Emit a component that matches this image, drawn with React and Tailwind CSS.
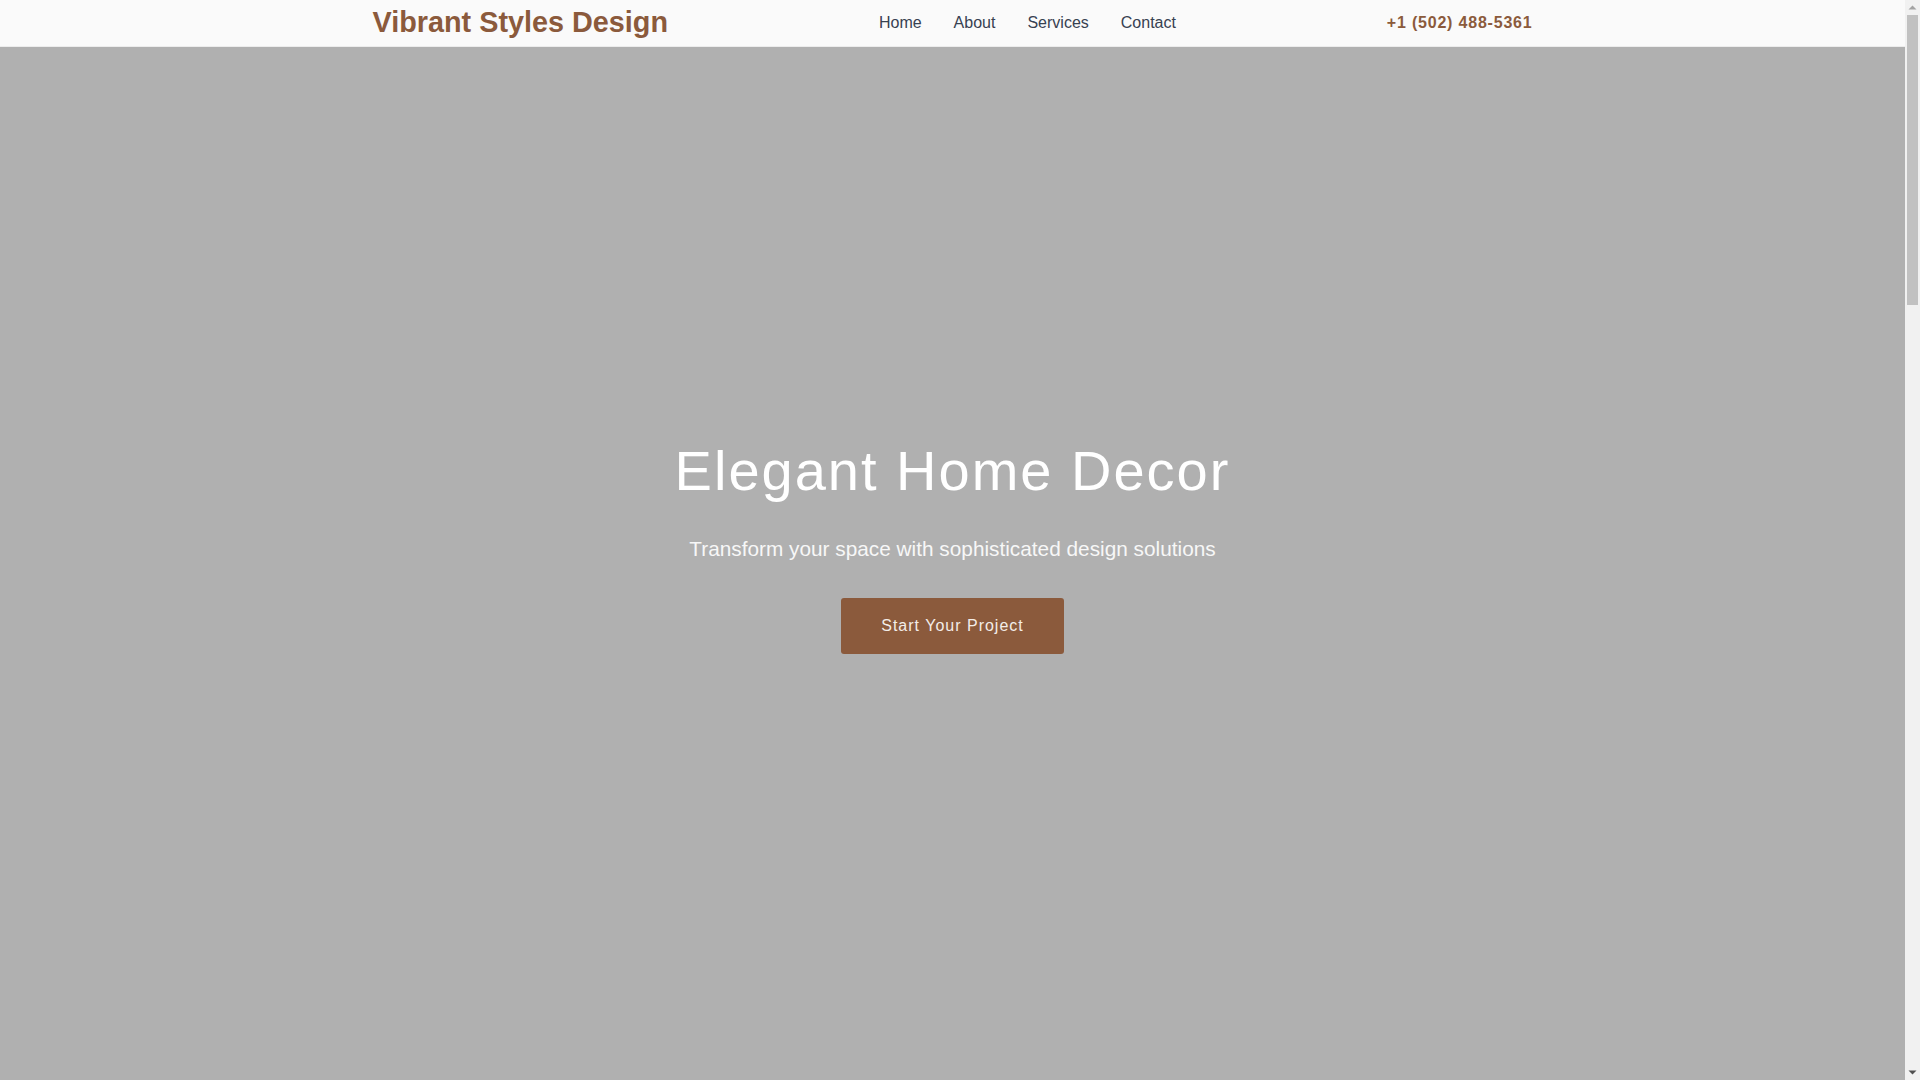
import React from "react";
import { Sofa, Lamp, Palette, Ruler, Phone, Mail, MapPin } from "lucide-react";

const navLinks = ["Home", "About", "Services", "Contact"];

const services = [
  { icon: Sofa, title: "Interior Styling", text: "Curated furniture and accessories that bring warmth and character to every room." },
  { icon: Palette, title: "Color Consultation", text: "Palettes chosen to suit your light, your architecture and the way you live." },
  { icon: Lamp, title: "Lighting Design", text: "Layered lighting plans that set the mood from morning coffee to late dinners." },
  { icon: Ruler, title: "Space Planning", text: "Thoughtful layouts that make the most of every square foot of your home." },
];

const Header = () => (
  <header className="sticky top-0 z-20 bg-[#fafafa] border-b border-[#ececec]">
    <div className="max-w-[1200px] mx-auto px-5 h-[46px] flex items-center justify-between">
      <a href="#" className="text-[1.8rem] font-bold text-[#8b5a3c] leading-normal">
        Vibrant Styles Design
      </a>
      <nav className="flex items-center gap-8">
        {navLinks.map((link) => (
          <a key={link} href={`#${link.toLowerCase()}`} className="text-base text-[#374151] hover:text-[#8b5a3c]">
            {link}
          </a>
        ))}
      </nav>
      <a href="tel:+15024885361" className="text-base font-bold tracking-[0.8px] text-[#8b5a3c]">
        +1 (502) 488-5361
      </a>
    </div>
  </header>
);

const Hero = () => (
  <section id="home" className="h-[calc(100vh-47px)] pb-[36px] bg-[#b0b0b0] flex flex-col items-center justify-center text-center">
    <h1 className="text-[3.5rem] leading-[1.2] font-normal tracking-[2px] text-white mb-7">
      Elegant Home Decor
    </h1>
    <p className="text-[1.3rem] leading-normal text-[#f7f7f7] mb-[34px]">
      Transform your space with sophisticated design solutions
    </p>
    <a href="#contact" className="bg-[#8b5a3c] text-[#f3ede8] text-base tracking-[1px] px-10 py-4 rounded-[3px] hover:bg-[#7a4e33]">
      Start Your Project
    </a>
  </section>
);

const About = () => (
  <section id="about" className="bg-white py-28">
    <div className="max-w-[1200px] mx-auto px-5 grid grid-cols-2 gap-16 items-center">
      <div className="h-[460px] bg-[#d9d2cb] rounded" />
      <div>
        <h2 className="text-4xl text-[#8b5a3c] font-bold mb-6">About Us</h2>
        <p className="text-lg text-[#4b5563] leading-relaxed mb-4">
          For over a decade, Vibrant Styles Design has helped homeowners create spaces that feel
          personal, comfortable and beautifully composed.
        </p>
        <p className="text-lg text-[#4b5563] leading-relaxed">
          We listen first, then design with care, balancing timeless materials with fresh ideas.
        </p>
      </div>
    </div>
  </section>
);

const Services = () => (
  <section id="services" className="bg-[#f5f1ed] py-28">
    <div className="max-w-[1200px] mx-auto px-5">
      <h2 className="text-4xl text-[#8b5a3c] font-bold text-center mb-16">Our Services</h2>
      <div className="grid grid-cols-2 gap-8">
        {services.map(({ icon: Icon, title, text }) => (
          <div key={title} className="bg-white p-10 rounded shadow-sm min-h-[260px]">
            <Icon className="w-10 h-10 text-[#8b5a3c] mb-5" />
            <h3 className="text-2xl font-bold text-[#374151] mb-3">{title}</h3>
            <p className="text-base text-[#6b7280] leading-relaxed">{text}</p>
          </div>
        ))}
      </div>
    </div>
  </section>
);

const Contact = () => (
  <section id="contact" className="bg-white py-28">
    <div className="max-w-[1200px] mx-auto px-5 grid grid-cols-2 gap-16">
      <div>
        <h2 className="text-4xl text-[#8b5a3c] font-bold mb-8">Contact</h2>
        <div className="space-y-5 text-lg text-[#4b5563]">
          <div className="flex items-center gap-3"><Phone className="w-5 h-5 text-[#8b5a3c]" />+1 (502) 488-5361</div>
          <div className="flex items-center gap-3"><Mail className="w-5 h-5 text-[#8b5a3c]" />hello@vibrantstyles.design</div>
          <div className="flex items-center gap-3"><MapPin className="w-5 h-5 text-[#8b5a3c]" />Louisville, Kentucky</div>
        </div>
      </div>
      <form className="space-y-4">
        <input className="w-full border border-gray-300 px-4 py-3 rounded" placeholder="Name" />
        <input className="w-full border border-gray-300 px-4 py-3 rounded" placeholder="Email" />
        <textarea className="w-full border border-gray-300 px-4 py-3 rounded h-40" placeholder="Tell us about your project" />
        <button type="button" className="bg-[#8b5a3c] text-white px-10 py-4 rounded tracking-[1px]">Send Message</button>
      </form>
    </div>
  </section>
);

const Footer = () => (
  <footer className="bg-[#2f2a26] text-[#d6cfc8] py-16">
    <div className="max-w-[1200px] mx-auto px-5 flex items-center justify-between">
      <span className="text-xl font-bold text-[#c9a384]">Vibrant Styles Design</span>
      <span className="text-sm">© 2024 Vibrant Styles Design. All rights reserved.</span>
    </div>
  </footer>
);

// classic page scrollbar, drawn so the 15px gutter shows like the reference
const Scrollbar = () => (
  <div className="w-[15px] h-screen shrink-0 bg-[#f1f1f1] flex flex-col items-center">
    <svg width="15" height="15" viewBox="0 0 15 15">
      <path d="M3.5 9.5 L7.5 5.5 L11.5 9.5 Z" fill="#a3a3a3" />
    </svg>
    <div className="w-[11px] h-[290px] bg-[#c1c1c1]" />
    <div className="flex-1" />
    <svg width="15" height="15" viewBox="0 0 15 15">
      <path d="M3.5 5.5 L7.5 9.5 L11.5 5.5 Z" fill="#505050" />
    </svg>
  </div>
);

export default function App() {
  return (
    <div className="h-screen flex font-['Liberation_Sans',Arial,sans-serif] bg-white">
      <div className="flex-1 h-screen overflow-y-auto [scrollbar-width:none]">
        <div className="min-h-[3900px]">
          <Header />
          <Hero />
          <About />
          <Services />
          <Contact />
          <Footer />
        </div>
      </div>
      <Scrollbar />
    </div>
  );
}
